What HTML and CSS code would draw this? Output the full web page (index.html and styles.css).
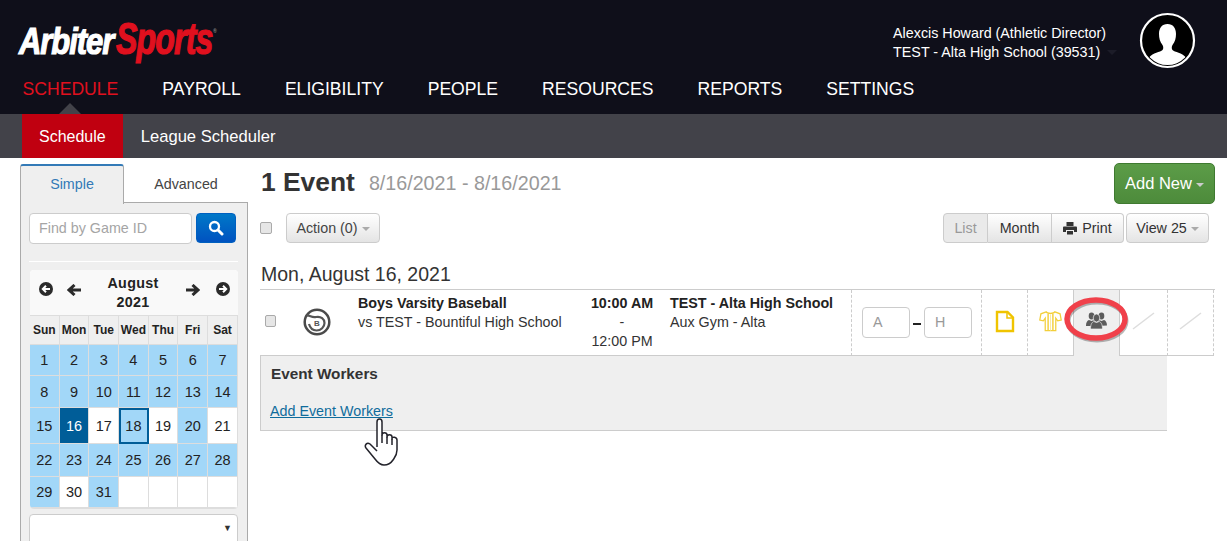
FILE: index.html
```html
<!DOCTYPE html>
<html lang="en">
<head>
<meta charset="utf-8">
<title>ArbiterSports Schedule</title>
<link rel="stylesheet" href="styles.css">
</head>
<body>
<header class="top">
  <div class="top-row">
    <div class="logo"><span class="logo-a"><span class="logo-in">Arbiter</span></span><span class="logo-s"><span class="logo-in">Sports</span></span><span class="logo-r">®</span></div>
    <div class="user">
      <div class="user-text">Alexcis Howard (Athletic Director)<br>TEST - Alta High School (39531)</div>
      <span class="user-caret"></span>
      <svg class="avatar" width="58" height="58" viewBox="0 0 58 58">
        <defs><clipPath id="av"><circle cx="28.500" cy="28.500" r="24.500"/></clipPath></defs>
        <circle cx="28.500" cy="28.500" r="26.500" fill="#000" stroke="#fff" stroke-width="2.200"/>
        <g clip-path="url(#av)" fill="#fff">
          <path d="M28.500 12c-5.500 0-8.500 4-8.500 10 0 4 1 8 3.500 11 1 1.500 1 4 0 5-2 2-10 3-13 7-1 2-2 4-2 8h40c0-4-1-6-2-8-3-4-11-5-13-7-1-1-1-3.500 0-5 2.500-3 3.500-7 3.500-11 0-6-3-10-8.500-10z"/>
        </g>
      </svg>
    </div>
  </div>
  <nav class="nav">
    <a class="nav-item active">SCHEDULE</a>
    <a class="nav-item">PAYROLL</a>
    <a class="nav-item">ELIGIBILITY</a>
    <a class="nav-item">PEOPLE</a>
    <a class="nav-item">RESOURCES</a>
    <a class="nav-item">REPORTS</a>
    <a class="nav-item">SETTINGS</a>
  </nav>
</header>
<div class="subnav">
  <a class="sub-item current">Schedule</a>
  <a class="sub-item league">League Scheduler</a>
</div>
<div class="page">
  <aside class="side">
    <div class="tabs">
      <a class="tab on">Simple</a>
      <a class="tab">Advanced</a>
    </div>
    <div class="panel">
      <div class="find">
        <div class="find-input">Find by Game ID</div>
        <button class="find-btn" type="button">
          <svg width="16" height="16" viewBox="0 0 16 16"><circle cx="6.500" cy="6.500" r="4.500" fill="none" stroke="#fff" stroke-width="2.300"/><path d="M10 10l4 4" stroke="#fff" stroke-width="3" stroke-linecap="round"/></svg>
        </button>
      </div>
      <div class="rule"></div>
      <div class="cal">
        <div class="cal-head">
          <svg class="ci" width="14" height="14" viewBox="0 0 14 14"><circle cx="7" cy="7" r="7" fill="#2b2b2b"/><path d="M11 7H4.500M7 3.800L3.800 7 7 10.200" fill="none" stroke="#fff" stroke-width="2"/></svg>
          <svg class="ar" width="14" height="12" viewBox="0 0 14 12"><path d="M14 6H3M7.500 1L2 6l5.500 5" fill="none" stroke="#2b2b2b" stroke-width="3"/></svg>
          <div class="cal-title">August<br>2021</div>
          <svg class="ar" width="14" height="12" viewBox="0 0 14 12"><path d="M0 6h11M6.500 1L12 6l-5.500 5" fill="none" stroke="#2b2b2b" stroke-width="3"/></svg>
          <svg class="ci" width="14" height="14" viewBox="0 0 14 14"><circle cx="7" cy="7" r="7" fill="#2b2b2b"/><path d="M3 7h6.500M7 3.800L10.200 7 7 10.200" fill="none" stroke="#fff" stroke-width="2"/></svg>
        </div>
        <div class="cal-grid">
          <div class="dow">Sun</div><div class="dow">Mon</div><div class="dow">Tue</div><div class="dow">Wed</div><div class="dow">Thu</div><div class="dow">Fri</div><div class="dow">Sat</div>
          <div class="d b">1</div><div class="d b">2</div><div class="d b">3</div><div class="d b">4</div><div class="d b">5</div><div class="d b">6</div><div class="d b">7</div>
          <div class="d b">8</div><div class="d b">9</div><div class="d b">10</div><div class="d b">11</div><div class="d b">12</div><div class="d b">13</div><div class="d b">14</div>
          <div class="d b">15</div><div class="d sel">16</div><div class="d">17</div><div class="d b today">18</div><div class="d">19</div><div class="d b">20</div><div class="d">21</div>
          <div class="d b">22</div><div class="d b">23</div><div class="d b">24</div><div class="d b">25</div><div class="d b">26</div><div class="d b">27</div><div class="d b">28</div>
          <div class="d b">29</div><div class="d">30</div><div class="d b">31</div><div class="d"></div><div class="d"></div><div class="d"></div><div class="d"></div>
        </div>
      </div>
      <div class="select"><span class="select-arrow">▼</span></div>
    </div>
  </aside>
  <main class="main">
    <div class="title-row">
      <h1 class="title">1 Event</h1>
      <span class="range">8/16/2021 - 8/16/2021</span>
      <button class="add" type="button">Add New<span class="caret light"></span></button>
    </div>
    <div class="tools">
      <span class="check"></span>
      <button class="btn action" type="button">Action (0)<span class="caret"></span></button>
      <div class="tools-right">
        <div class="group">
          <button class="btn g1" type="button">List</button>
          <button class="btn g2" type="button">Month</button>
          <button class="btn g3" type="button">
            <svg width="14" height="14" viewBox="0 0 14 14"><path d="M3.500 1h7v4h-7z" fill="#333"/><path d="M1 5.500h12c.500 0 1 .500 1 1V11h-3V9H3v2H0V6.500c0-.500.500-1 1-1z" fill="#333"/><path d="M4 10h6v3.500H4z" fill="#333"/></svg>
            Print</button>
        </div>
        <button class="btn view" type="button">View 25<span class="caret"></span></button>
      </div>
    </div>
    <h2 class="day">Mon, August 16, 2021</h2>
    <div class="event">
      <div class="cell c-check"><span class="check small"></span></div>
      <div class="cell c-sport">
        <svg width="28" height="28" viewBox="0 0 28 28"><circle cx="14" cy="14" r="12.300" fill="none" stroke="#4a4a4a" stroke-width="2.500"/><path d="M3.500 7.500c3.500-.500 5 2.500 9.500 1.500 5-1 8.500 2 8.500 6s-3.500 7.500-8 7.500c-4 0-6.500-3-7.500-6.500" fill="none" stroke="#555" stroke-width="2.200"/><text class="sport-d" x="14" y="17.500" text-anchor="middle">B</text></svg>
      </div>
      <div class="cell c-game"><strong>Boys Varsity Baseball</strong><br>vs TEST - Bountiful High School</div>
      <div class="cell c-time"><strong>10:00 AM</strong><br>-<br>12:00 PM</div>
      <div class="cell c-loc"><strong>TEST - Alta High School</strong><br>Aux Gym - Alta</div>
      <div class="cell c-score dash"><span class="score">A</span><span class="minus"></span><span class="score">H</span></div>
      <div class="cell c-ic dash">
        <svg width="20" height="23" viewBox="0 0 20 22"><path d="M2 1.500h10.500l5.500 5.500v13.500H2z" fill="none" stroke="#f0c400" stroke-width="2.400"/><path d="M12 2v5.500h6" fill="none" stroke="#f0c400" stroke-width="1.500"/></svg>
      </div>
      <div class="cell c-ic dash">
        <svg width="23" height="22" viewBox="0 0 24 22"><path d="M7.500 1.500L2 3.500.8 10l3.700.800L6.500 8v13h11V8l2 2.800 3.700-.800L22 3.500l-5.500-2c-1 2-8 2-9 0z" fill="#fff" stroke="#f3cf3a" stroke-width="1.300"/><path d="M9.500 3.500v17.500M14.500 3.500v17.500" stroke="#f3cf3a" stroke-width="1.500"/><path d="M12 4v17" stroke="#faeaa0" stroke-width="1"/></svg>
      </div>
      <div class="cell c-ic c-workers">
        <svg width="21" height="17" viewBox="0 0 21 17" fill="#5c5c5c"><ellipse cx="5.500" cy="4" rx="2.800" ry="3.400"/><ellipse cx="15.500" cy="4" rx="2.800" ry="3.400"/><path d="M0 13.500c0-3.500 1.500-5 3-5.500l2.500 1 2.500-1 2 6H0zM11 14l2-6 2.500 1 2.500-1c1.500.500 3 2 3 5.500z"/><ellipse cx="10.500" cy="6" rx="3.300" ry="4" stroke="#efefef" stroke-width=".7"/><path d="M4.500 17c0-5 1.800-7 3.300-7.500l2.700 1 2.700-1c1.500.500 3.300 2.500 3.300 7.500z" stroke="#efefef" stroke-width=".7"/></svg>
      </div>
      <div class="cell c-ic dash blank"><svg width="23" height="18" viewBox="0 0 23 18"><path d="M1 17L22 1" stroke="#ddd" stroke-width="1.500"/></svg></div>
      <div class="cell c-ic dash blank last"><svg width="23" height="18" viewBox="0 0 23 18"><path d="M1 17L22 1" stroke="#ddd" stroke-width="1.500"/></svg></div>
    </div>
    <section class="workers">
      <h3 class="workers-title">Event Workers</h3>
      <a class="workers-link">Add Event Workers</a>
    </section>
  </main>
</div>
<svg class="ring" width="72" height="50" viewBox="0 0 72 50"><ellipse cx="36" cy="26" rx="29" ry="19" fill="none" stroke="#000" stroke-opacity=".28" stroke-width="5"/><ellipse cx="35" cy="24" rx="29" ry="19" fill="none" stroke="#f0404a" stroke-width="5.500"/></svg>
<svg class="hand" width="38" height="50" viewBox="0 0 38 50"><path d="M13 31V6c0-4 5-4 5 0v13c0-3 5-3 5 0v2c0-3 5-3 5 0v2c0-3 5-2 5 1v10c0 5-2 7-4 10-2 3-4 5-9 5-4 0-6-2-9-6L2 32c-2-3 1-6 4-4l7 7" fill="#fff" stroke="#23232b" stroke-width="1.500" stroke-linejoin="round"/><path d="M18 19v8M23 21v7M28 23v6" stroke="#23232b" stroke-width="1.500" fill="none"/></svg>
</body>
</html>
```
FILE: styles.css
```css
* { box-sizing: border-box; }
html, body { height: 541px; overflow: hidden; }
body { margin: 0; position: relative; background: #fff; font-family: "Liberation Sans", Arial, sans-serif; font-size: 14.3px; color: #333; }
button { font-family: inherit; }

.top { height: 114px; background: #0f0f1a; }
.top-row { height: 70px; display: flex; justify-content: space-between; align-items: flex-start; }
.logo { margin: 19px 0 0 19px; display: flex; align-items: baseline; font-weight: 700; font-style: italic; -webkit-text-stroke: 1.2px currentColor; white-space: nowrap; }
.logo-a { color: #fff; width: 97px; font-size: 36px; line-height: 40px; letter-spacing: -1.2px; }
.logo-s { color: #e0101e; width: 98px; font-size: 44px; line-height: 40px; letter-spacing: -1.2px; }
.logo-in { display: inline-block; transform-origin: left center; }
.logo-a .logo-in { transform: scaleX(.86); }
.logo-s .logo-in { transform: scaleX(.73); }
.logo-r { color: #888; font-size: 5px; line-height: 20px; letter-spacing: 0; -webkit-text-stroke: 0; align-self: flex-start; margin: 2px 0 0 -1px; }
.user { display: flex; align-items: flex-start; margin-right: 30px; position: relative; }
.user-text { color: #fff; font-size: 14.3px; line-height: 19px; margin: 24px 33px 0 0; white-space: nowrap; }
.user-caret { position: absolute; left: 214px; top: 50px; border: 5px solid transparent; border-top-color: #1c1c28; }
.avatar { margin-top: 12px; }

.nav { display: flex; gap: 44px; padding-left: 22.5px; }
.nav-item { font-size: 17.6px; line-height: 38px; color: #fff; position: relative; }
.nav-item.active { color: #e0101e; }
.nav-item.active::after { content: ""; position: absolute; left: 36px; top: 33px; border: 11px solid transparent; border-top: 0; border-bottom-color: #424249; }

.subnav { height: 44px; background: #424249; padding-left: 22px; display: flex; }
.sub-item { color: #fff; font-size: 16px; line-height: 45px; padding: 0 17px; }
.sub-item.current { background: #c00010; }
.sub-item.league { font-size: 16.6px; padding-left: 18px; }

.page { display: flex; align-items: flex-start; padding-left: 20px; }
.side { width: 228px; margin-top: 6px; flex: none; }
.tabs { display: flex; height: 39px; align-items: stretch; }
.tab { width: 104px; text-align: center; line-height: 40px; color: #444; position: relative; }
.tab + .tab { width: 124px; border-bottom: 1px solid #aaa; }
.tab.on { color: #337ab7; background: #efefef; border: 1px solid #aaa; border-top: 2px solid #337ab7; border-bottom: 0; border-radius: 3px 3px 0 0; margin-bottom: -1px; z-index: 1; line-height: 36px; height: 40px; }
.panel { height: 340px; background: #efefef; border: 1px solid #aaa; border-top: 0; padding: 10px 9px 0 8px; }
.find { display: flex; gap: 4px; }
.find-input { width: 163px; height: 31px; background: #fff; border: 1px solid #ccc; border-radius: 4px; color: #a5a5a5; line-height: 29px; padding-left: 9px; }
.find-btn { width: 40px; height: 30px; border: 1px solid #0060c0; border-radius: 4px; background: linear-gradient(#0078c8, #0052c0); padding: 0; display: flex; align-items: center; justify-content: center; }
.rule { height: 1px; background: #fff; margin: 17px 0 8px; }
.cal { width: 208px; margin-left: 1px; border-radius: 4px; overflow: hidden; background: #fff; border-bottom: 1px solid #ddd; }
.cal-head { height: 46px; background: #f9f9f9; display: flex; align-items: flex-start; padding: 12px 8px 0 9px; border-bottom: 1px solid #ddd; }
.cal-title { font-weight: 700; font-size: 14.3px; line-height: 19px; text-align: center; width: 80px; margin-top: -8px; color: #222; letter-spacing: .3px; }
.cal-head .ar { margin: 2px 0 0 14px; flex: none; }
.cal-head .ar + .cal-title { margin-left: 12px; margin-right: 13px; }
.cal-head .cal-title + .ar { margin-left: 0; }
.cal-head .ar + .ci { margin-left: 16px; }
.cal-grid { display: grid; grid-template-columns: repeat(7, 29.7px); grid-template-rows: 29px 31px 32px 36px 33px 31px; }
.dow { background: #efefef; border-right: 1px solid #ddd; border-bottom: 1px solid #ddd; font-size: 12px; font-weight: 700; text-align: center; line-height: 28px; color: #222; }
.d { background: #fff; border-right: 1px solid #ddd; border-bottom: 1px solid #ddd; text-align: center; font-size: 14.5px; display: flex; align-items: center; justify-content: center; color: #222; }
.d.b { background: #a2d7f8; }
.d.sel { background: #005d98; color: #fff; }
.d.today { outline: 2px solid #005d98; outline-offset: -2px; padding-top: 1px; }
.select { position: relative; margin: 5px 0 0; width: 209px; height: 40px; background: #fff; border: 1px solid #ccc; border-radius: 4px; }
.select-arrow { position: absolute; right: 5px; top: 8px; font-size: 9px; color: #333; }

.main { margin-left: 12px; width: 955px; flex: none; }
.title-row { display: flex; align-items: flex-start; height: 55px; padding-top: 5px; }
.title { margin: 4px 0 0 1px; font-size: 26.4px; line-height: 30px; font-weight: 700; color: #333; }
.range { margin: 8px 0 0 14px; font-size: 19.7px; line-height: 24px; color: #999; }
.add { margin-left: auto; width: 101px; height: 41px; font-size: 16.5px; color: #fff; background: linear-gradient(#5c9c48, #4d8b3b); border: 1px solid #3f7a30; border-radius: 5px; padding: 0; }
.caret { display: inline-block; margin-left: 4px; vertical-align: middle; border: 4px solid transparent; border-bottom: 0; border-top-color: #aaa; }
.caret.light { border-top-color: #ccc; border-width: 4.5px 4.5px 0; }
.tools { display: flex; align-items: center; height: 30px; }
.check { width: 12px; height: 12px; border: 1px solid #aaa; border-radius: 2px; background: #e6e6e6; display: block; }
.tools > .check { margin-right: 14px; }
.btn { height: 30px; font-size: 14.3px; color: #333; background: linear-gradient(#fff, #e4e4e4); border: 1px solid #ccc; border-radius: 4px; padding: 0; }
.action { width: 94px; color: #444; }
.tools-right { margin-left: auto; margin-right: 6px; display: flex; gap: 2px; }
.group { display: flex; }
.g1 { width: 45px; color: #999; background: #eaeaea; border-radius: 4px 0 0 4px; }
.g2 { width: 64px; border-left: 0; border-radius: 0; }
.g3 { width: 72px; border-left: 0; border-radius: 0 4px 4px 0; display: flex; align-items: center; justify-content: center; gap: 5px; }
.view { width: 83px; }
.day { margin: 19px 0 0 1px; height: 27px; font-size: 19.5px; line-height: 24px; font-weight: 400; color: #333; }

.event { width: 955px; height: 67px; display: grid; grid-template-columns: 37px 61px 232px 64px 197px 130px 46px 46px 47px 47px 47px; border-top: 1px solid #ccc; }
.cell { height: 66px; border-bottom: 1px solid #ccc; line-height: 19px; font-size: 14.3px; }
.cell strong { color: #222; }
.c-check { padding: 25px 0 0 5px; }
.check.small { width: 11px; height: 12px; }
.c-sport { padding: 18px 0 0 6px; }
.sport-d { font: 700 8px "Liberation Sans", sans-serif; fill: #555; }
.c-game, .c-loc { padding-top: 4px; white-space: nowrap; }
.c-time { padding-top: 4px; text-align: center; white-space: nowrap; }
.c-loc { padding-left: 16px; }
.dash { border-left: 1px dashed #ccc; }
.c-score { display: flex; align-items: center; padding-left: 10px; padding-bottom: 1px; }
.score { width: 48px; height: 31px; background: #fff; border: 1px solid #ccc; border-radius: 4px; color: #999; line-height: 29px; padding-left: 10px; font-size: 14.3px; }
.minus { width: 8px; height: 2px; background: #222; margin: 3px 3px 0; }
.c-ic { display: flex; align-items: center; justify-content: center; padding-bottom: 3px; }
.c-workers { background: #efefef; border-left: 1px solid #ccc; border-right: 1px solid #ccc; border-bottom: 0; padding-bottom: 5px; }
.blank.last { border-right: 1px dashed #ccc; }
.c-workers + .blank { border-left: 0; }

.workers { width: 907px; height: 76px; margin-top: -1px; background: #efefef; border-left: 1px solid #ccc; border-bottom: 1px solid #ccc; padding: 9px 0 0 10px; }
.workers-title { margin: 0; font-size: 15.3px; line-height: 20px; font-weight: 700; color: #333; }
.workers-link { display: inline-block; margin: 17px 0 0 -1px; color: #0f6c9c; text-decoration: underline; line-height: 20px; }

.ring { position: absolute; left: 1061px; top: 295px; }
.hand { position: absolute; left: 364px; top: 416px; }
```
